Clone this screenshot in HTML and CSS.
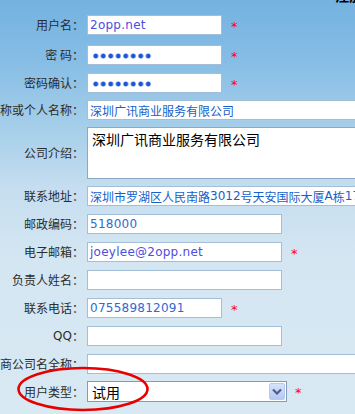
FILE: index.html
```html
<!DOCTYPE html>
<html>
<head>
<meta charset="utf-8">
<link rel="stylesheet" href="styles.css">
</head>
<body>
<div class="page">
  <div class="topline"><span class="toptext">注册信息</span></div>
  <div class="form">
    <div class="row">
      <div class="lbl">用户名：</div>
      <div class="field w135 val purple">2opp.net</div>
      <span class="req">*</span>
    </div>
    <div class="row r2">
      <div class="lbl">密 码：</div>
      <div class="field w135"><span class="dots"></span></div>
      <span class="req">*</span>
    </div>
    <div class="row">
      <div class="lbl">密码确认：</div>
      <div class="field w135"><span class="dots"></span></div>
      <span class="req">*</span>
    </div>
    <div class="row up">
      <div class="lbl">公司名称或个人名称：</div>
      <div class="field wide cjkval">深圳广讯商业服务有限公司</div>
    </div>
    <div class="row up">
      <div class="lbl">公司介绍：</div>
      <div class="field wide area">深圳广讯商业服务有限公司</div>
    </div>
    <div class="row up">
      <div class="lbl">联系地址：</div>
      <div class="field wide cjkval">深圳市罗湖区人民南路<span class="lat">3012</span>号天安国际大厦<span class="lat">A</span>栋<span class="lat">17</span>楼</div>
    </div>
    <div class="row">
      <div class="lbl">邮政编码：</div>
      <div class="field w195 val">518000</div>
    </div>
    <div class="row">
      <div class="lbl">电子邮箱：</div>
      <div class="field w195 val purple">joeylee@2opp.net</div>
      <span class="req">*</span>
    </div>
    <div class="row">
      <div class="lbl">负责人姓名：</div>
      <div class="field w195"></div>
    </div>
    <div class="row">
      <div class="lbl">联系电话：</div>
      <div class="field w135 val">075589812091</div>
      <span class="req">*</span>
    </div>
    <div class="row">
      <div class="lbl"><span class="lat qq">QQ</span>：</div>
      <div class="field w195"></div>
    </div>
    <div class="row">
      <div class="lbl">代理商公司名全称：</div>
      <div class="field wide"></div>
    </div>
    <div class="row up">
      <div class="lbl">用户类型：</div>
      <div class="select">
        <span class="seltext">试用</span>
        <span class="selbtn">
          <svg width="10" height="7" viewBox="0 0 10 7"><path d="M1 1.5 L5 5.5 L9 1.5" fill="none" stroke="#4a5f86" stroke-width="2.2"/></svg>
        </span>
      </div>
      <span class="req reqsel">*</span>
    </div>
  </div>
  <svg class="mark" width="355" height="414" viewBox="0 0 355 414">
    <ellipse cx="83" cy="389" rx="64.5" ry="21" fill="none" stroke="#e60000" stroke-width="2.6"/>
  </svg>
</div>
</body>
</html>
```
FILE: styles.css
```css
html, body {
  margin: 0;
  padding: 0;
}
body {
  width: 355px;
  height: 414px;
  overflow: hidden;
  font-family: "Noto Sans CJK SC", "Noto Sans", sans-serif;
}
.page {
  position: relative;
  width: 355px;
  height: 414px;
  overflow: hidden;
  background: linear-gradient(180deg, #74b2e0 0px, #86bde5 60px, #a7cfea 130px, #c6def0 190px, #d4e6f2 260px, #d8e9f3 414px);
}
.topline {
  height: 15px;
  overflow: hidden;
  display: flex;
  justify-content: flex-end;
}
.toptext {
  margin-top: -13px;
  margin-right: -36px;
  font-size: 14px;
  font-weight: bold;
  color: #000;
  line-height: 16px;
}
.form {
  display: flex;
  flex-direction: column;
  gap: 8px;
}
.row {
  display: flex;
  align-items: center;
}
.r2 { margin-top: 2px; }
.up { margin-top: -1px; }
.lbl {
  flex: 0 0 84px;
  width: 84px;
  margin-right: 3px;
  display: flex;
  justify-content: flex-end;
  white-space: nowrap;
  font-size: 12px;
  line-height: 14px;
  color: #2c2c2c;
}
.qq {
  font-family: "DejaVu Sans", sans-serif;
  font-size: 12.5px;
  color: #2c2c2c;
}
.field {
  box-sizing: border-box;
  height: 20px;
  background: #fff;
  border: 1px solid #a3bfd7;
  padding: 0 0 0 2px;
  display: flex;
  align-items: center;
  white-space: nowrap;
  overflow: hidden;
  flex-shrink: 0;
}
.w135 { width: 135px; }
.w195 { width: 195px; }
.wide { width: 300px; }
.val {
  font-family: "DejaVu Sans", sans-serif;
  font-size: 12px;
  letter-spacing: 0.25px;
  color: #3168d4;
}
.purple { color: #4b4ee0; }
.cjkval {
  font-size: 12px;
  color: #1660c8;
}
.lat {
  font-family: "DejaVu Sans", sans-serif;
  font-size: 12px;
}
.area {
  height: 52px;
  align-items: flex-start;
  padding: 2px 0 0 4px;
  border-color: #8ca8c2;
  font-size: 14px;
  line-height: 18px;
  color: #000;
}
.dots {
  display: block;
  width: 60px;
  height: 6px;
  margin-left: 2px;
  margin-top: 2px;
  background: radial-gradient(circle, #1d55d6 0, #1d55d6 1.9px, rgba(40, 100, 220, 0.35) 2.6px, transparent 3px) 0 0 / 7.5px 6px repeat-x;
}
.req {
  margin-left: 9px;
  color: #ff0000;
  font-family: "DejaVu Sans", sans-serif;
  font-size: 13px;
  line-height: 14px;
  margin-top: 3px;
}
.reqsel { margin-left: 8px; }
.select {
  box-sizing: border-box;
  width: 200px;
  height: 21px;
  background: #fff;
  border: 1px solid #7f9db9;
  display: flex;
  align-items: center;
  justify-content: space-between;
  flex-shrink: 0;
}
.seltext {
  padding-left: 4px;
  font-size: 14px;
  color: #000;
  line-height: 16px;
}
.selbtn {
  box-sizing: border-box;
  width: 16px;
  height: 17px;
  margin-right: 1px;
  border: 1px solid #b9c9ef;
  border-radius: 2px;
  background: linear-gradient(180deg, #d8e2fb 0%, #c2d2f7 60%, #b6c8f3 100%);
  display: flex;
  align-items: center;
  justify-content: center;
}
.mark {
  position: absolute;
  left: 0;
  top: 0;
  pointer-events: none;
}
```
